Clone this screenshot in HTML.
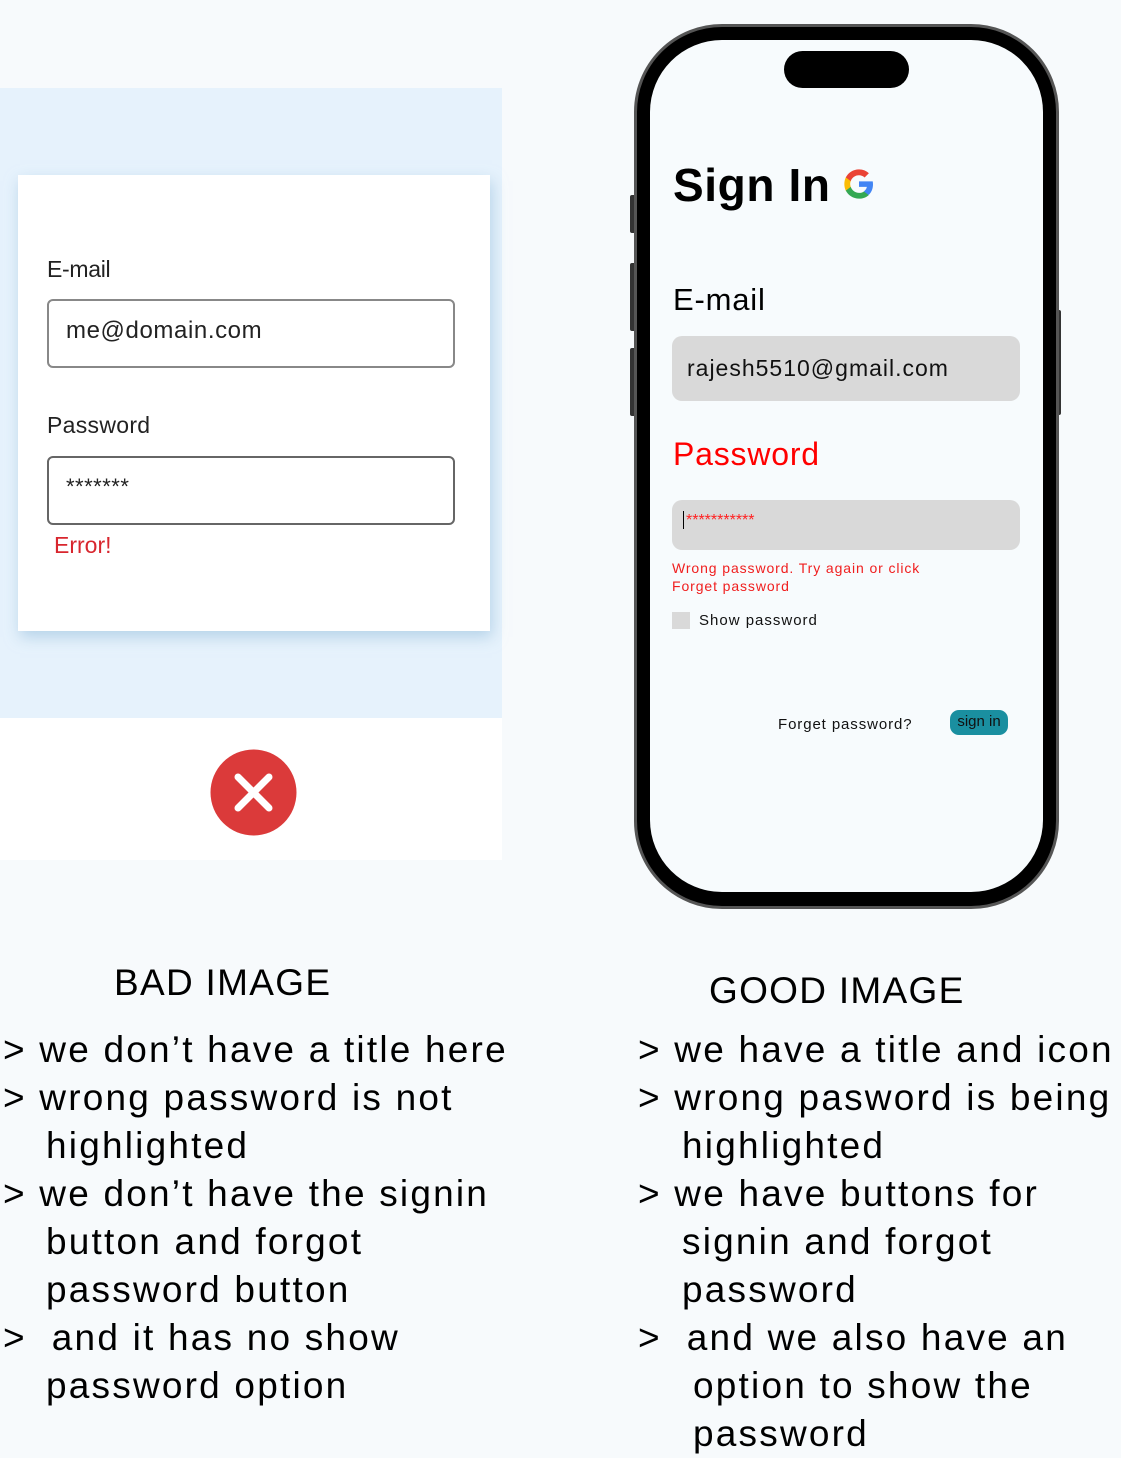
<!DOCTYPE html>
<html><head><meta charset="utf-8"><style>
*{margin:0;padding:0;box-sizing:border-box}
body{width:1121px;height:1457px;background:#f7fafc;position:relative;overflow:hidden;font-family:"Liberation Sans",sans-serif;color:#000}
.a{position:absolute;white-space:nowrap}
.t{font-size:37px;line-height:48px;height:48px;letter-spacing:2.2px}
</style></head><body>
<!-- bad image -->
<div class="a" style="left:0;top:88px;width:502px;height:630px;background:#e6f2fc"></div>
<div class="a" style="left:18px;top:175px;width:472px;height:456px;background:#fff;box-shadow:2px 6px 14px rgba(150,190,220,.6)"></div>
<div class="a" style="left:47px;top:256px;font-size:23px;color:#222;letter-spacing:-0.3px">E-mail</div>
<div class="a" style="left:47px;top:299px;width:408px;height:69px;border:2px solid #888;border-radius:6px;background:#fff"></div>
<div class="a" style="left:66px;top:317px;font-size:24px;color:#222;letter-spacing:0.6px">me@domain.com</div>
<div class="a" style="left:47px;top:412px;font-size:23px;color:#222;letter-spacing:0.3px">Password</div>
<div class="a" style="left:47px;top:456px;width:408px;height:69px;border:2px solid #666;border-radius:6px;background:#fff"></div>
<div class="a" style="left:66px;top:474px;font-size:22px;color:#222;letter-spacing:0.5px">*******</div>
<div class="a" style="left:54px;top:532px;font-size:23px;color:#d8262e">Error!</div>
<div class="a" style="left:0;top:718px;width:502px;height:142px;background:#fff"></div>
<svg class="a" style="left:210px;top:749px" width="87" height="87" viewBox="0 0 87 87"><circle cx="43.5" cy="43.5" r="43" fill="#db3a3a"/><path d="M28 28L59 59M59 28L28 59" stroke="#fff" stroke-width="7" stroke-linecap="round"/></svg>

<!-- phone -->
<div class="a" style="left:630px;top:195px;width:6px;height:38px;background:#333;border-radius:2px"></div>
<div class="a" style="left:630px;top:263px;width:6px;height:68px;background:#333;border-radius:2px"></div>
<div class="a" style="left:630px;top:348px;width:6px;height:68px;background:#333;border-radius:2px"></div>
<div class="a" style="left:1055px;top:310px;width:6px;height:105px;background:#333;border-radius:2px"></div>
<div class="a" style="left:634px;top:24px;width:425px;height:885px;background:#000;border-radius:88px;border:3px solid #555"></div>
<div class="a" style="left:650px;top:40px;width:393px;height:852px;background:#f7fbfd;border-radius:72px"></div>
<div class="a" style="left:784px;top:51px;width:125px;height:37px;background:#000;border-radius:19px"></div>
<div class="a" style="left:673px;top:158px;font-size:46px;font-weight:bold;letter-spacing:0.6px">Sign In</div>
<svg class="a" style="left:843px;top:168px" width="32" height="32" viewBox="0 0 24 24"><path d="M22.5 12.2c0-.8-.1-1.5-.2-2.2H12v4.2h5.9c-.3 1.4-1 2.5-2.2 3.3v2.7h3.6c2.1-1.9 3.2-4.8 3.2-8z" fill="#4285F4"/><path d="M12 23c3 0 5.5-1 7.3-2.7l-3.6-2.7c-1 .7-2.2 1.1-3.7 1.1-2.9 0-5.3-1.9-6.2-4.5H2.1v2.8C3.9 20.5 7.7 23 12 23z" fill="#34A853"/><path d="M5.8 14.2c-.2-.7-.4-1.4-.4-2.2s.1-1.5.4-2.2V7H2.1C1.4 8.5 1 10.2 1 12s.4 3.5 1.1 5l3.7-2.8z" fill="#FBBC05"/><path d="M12 5.4c1.6 0 3.1.6 4.2 1.7l3.2-3.2C17.5 2.1 15 1 12 1 7.7 1 3.9 3.5 2.1 7l3.7 2.8c.9-2.6 3.3-4.4 6.2-4.4z" fill="#EA4335"/></svg>
<div class="a" style="left:673px;top:282px;font-size:31px;letter-spacing:0.8px">E-mail</div>
<div class="a" style="left:672px;top:336px;width:348px;height:65px;background:#d9d9d9;border-radius:10px"></div>
<div class="a" style="left:687px;top:355px;font-size:23px;color:#111;letter-spacing:1px">rajesh5510@gmail.com</div>
<div class="a" style="left:673px;top:436px;font-size:32px;color:#f00;letter-spacing:0.8px">Password</div>
<div class="a" style="left:672px;top:500px;width:348px;height:50px;background:#d9d9d9;border-radius:10px"></div>
<div class="a" style="left:683px;top:511px;width:1px;height:18px;background:#000"></div>
<div class="a" style="left:686px;top:512px;font-size:16px;color:#f22">***********</div>
<div class="a" style="left:672px;top:559px;font-size:14px;line-height:18px;color:#f01e1e;letter-spacing:0.9px">Wrong password. Try again or click<br>Forget password</div>
<div class="a" style="left:672px;top:612px;width:18px;height:17px;background:#d9d9d9"></div>
<div class="a" style="left:699px;top:612px;font-size:15px;color:#111;letter-spacing:1px">Show password</div>
<div class="a" style="left:778px;top:716px;font-size:15px;color:#111;letter-spacing:0.9px">Forget password?</div>
<div class="a" style="left:950px;top:710px;width:58px;height:25px;background:#1a8fa0;border-radius:9px;font-size:15px;line-height:24px;text-align:center;color:#111">sign in</div>

<!-- text -->
<div class="a t" style="left:114px;top:959px;letter-spacing:1.3px">BAD IMAGE</div>
<div class="a t" style="left:3px;top:1026px">&gt; we don’t have a title here</div>
<div class="a t" style="left:3px;top:1074px">&gt; wrong password is not</div>
<div class="a t" style="left:46px;top:1122px">highlighted</div>
<div class="a t" style="left:3px;top:1170px">&gt; we don’t have the signin</div>
<div class="a t" style="left:46px;top:1218px">button and forgot</div>
<div class="a t" style="left:46px;top:1266px">password button</div>
<div class="a t" style="left:3px;top:1314px">&gt;&nbsp; and it has no show</div>
<div class="a t" style="left:46px;top:1362px">password option</div>

<div class="a t" style="left:709px;top:967px;letter-spacing:1.3px">GOOD IMAGE</div>
<div class="a t" style="left:638px;top:1026px">&gt; we have a title and icon</div>
<div class="a t" style="left:638px;top:1074px">&gt; wrong pasword is being</div>
<div class="a t" style="left:682px;top:1122px">highlighted</div>
<div class="a t" style="left:638px;top:1170px">&gt; we have buttons for</div>
<div class="a t" style="left:682px;top:1218px">signin and forgot</div>
<div class="a t" style="left:682px;top:1266px">password</div>
<div class="a t" style="left:638px;top:1314px">&gt;&nbsp; and we also have an</div>
<div class="a t" style="left:693px;top:1362px">option to show the</div>
<div class="a t" style="left:693px;top:1410px">password</div>
</body></html>
